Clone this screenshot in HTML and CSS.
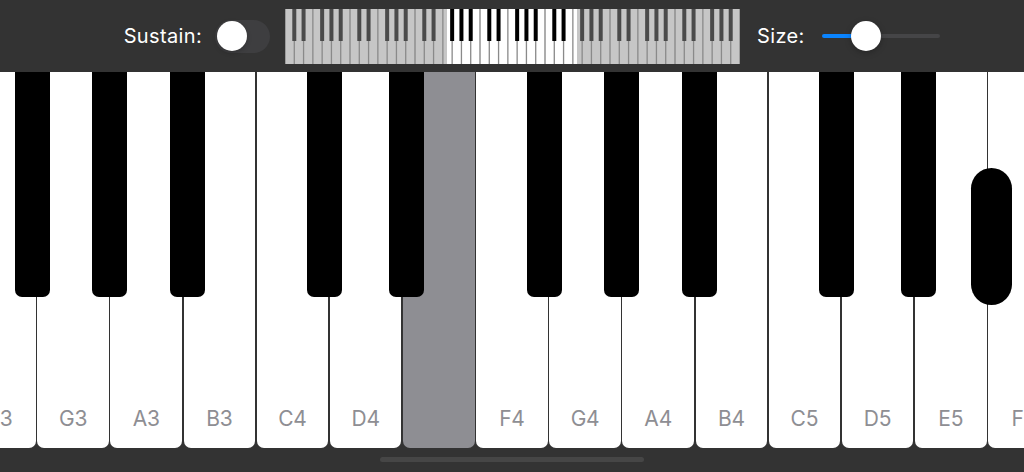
FILE: index.html
```html
<!DOCTYPE html>
<html lang="en">
<head>
<meta charset="utf-8">
<title>Piano</title>
<link rel="stylesheet" href="styles.css">
</head>
<body>
<div class="topbar">
  <div class="group group-left">
    <span class="bar-label">Sustain:</span>
    <div class="switch"><div class="switch-knob"></div></div>
  </div>
  <svg class="mini" width="455" height="55" viewBox="0 0 455 55">
    <defs>
      <pattern id="oct-gray" x="0" y="0" width="65" height="55" patternUnits="userSpaceOnUse">
        <rect width="65" height="55" fill="#c6c6c6"/>
        <rect x="0" width="0.7" height="55" fill="#8a8a8a"/>
        <rect x="64.3" width="0.7" height="55" fill="#8a8a8a"/>
        <rect x="8.64" width="1.3" height="55" fill="#8a8a8a"/>
        <rect x="17.92" width="1.3" height="55" fill="#8a8a8a"/>
        <rect x="27.21" width="1.3" height="55" fill="#8a8a8a"/>
        <rect x="36.49" width="1.3" height="55" fill="#8a8a8a"/>
        <rect x="45.78" width="1.3" height="55" fill="#8a8a8a"/>
        <rect x="55.06" width="1.3" height="55" fill="#8a8a8a"/>
        <rect x="7.29" width="4" height="32" fill="#4a4a4a"/>
        <rect x="16.57" width="4" height="32" fill="#4a4a4a"/>
        <rect x="35.14" width="4" height="32" fill="#4a4a4a"/>
        <rect x="44.43" width="4" height="32" fill="#4a4a4a"/>
        <rect x="53.71" width="4" height="32" fill="#4a4a4a"/>
      </pattern>
      <pattern id="oct-white" x="0" y="0" width="65" height="55" patternUnits="userSpaceOnUse">
        <rect width="65" height="55" fill="#ffffff"/>
        <rect x="0" width="0.7" height="55" fill="#8a8a8a"/>
        <rect x="64.3" width="0.7" height="55" fill="#8a8a8a"/>
        <rect x="8.64" width="1.3" height="55" fill="#8a8a8a"/>
        <rect x="17.92" width="1.3" height="55" fill="#8a8a8a"/>
        <rect x="27.21" width="1.3" height="55" fill="#8a8a8a"/>
        <rect x="36.49" width="1.3" height="55" fill="#8a8a8a"/>
        <rect x="45.78" width="1.3" height="55" fill="#8a8a8a"/>
        <rect x="55.06" width="1.3" height="55" fill="#8a8a8a"/>
        <rect x="7.29" width="4" height="32" fill="#000000"/>
        <rect x="16.57" width="4" height="32" fill="#000000"/>
        <rect x="35.14" width="4" height="32" fill="#000000"/>
        <rect x="44.43" width="4" height="32" fill="#000000"/>
        <rect x="53.71" width="4" height="32" fill="#000000"/>
      </pattern>
    </defs>
    <rect x="0" y="0" width="455" height="55" fill="url(#oct-gray)"/>
    <rect x="162" y="0" width="130" height="55" fill="url(#oct-white)"/>
  </svg>
  <div class="group group-right">
    <span class="bar-label size-label">Size:</span>
    <div class="slider">
      <div class="slider-fill"></div>
      <div class="slider-knob"></div>
      <div class="slider-rest"></div>
    </div>
  </div>
</div>

<div class="keys-wrap">
  <div class="keyboard">
    <div class="white"><div class="black fs"></div><span class="note">F3</span></div>
    <div class="white"><div class="black gs"></div><span class="note">G3</span></div>
    <div class="white"><div class="black as"></div><span class="note">A3</span></div>
    <div class="white"><span class="note">B3</span></div>
    <div class="white"><div class="black cs"></div><span class="note">C4</span></div>
    <div class="white"><div class="black ds"></div><span class="note">D4</span></div>
    <div class="white pressed"><span class="note">E4</span></div>
    <div class="white"><div class="black fs"></div><span class="note">F4</span></div>
    <div class="white"><div class="black gs"></div><span class="note">G4</span></div>
    <div class="white"><div class="black as"></div><span class="note">A4</span></div>
    <div class="white"><span class="note">B4</span></div>
    <div class="white"><div class="black cs"></div><span class="note">C5</span></div>
    <div class="white"><div class="black ds"></div><span class="note">D5</span></div>
    <div class="white"><div class="black floating"></div><span class="note">E5</span></div>
    <div class="white"><div class="black fs"></div><span class="note">F5</span></div>
  </div>
</div>

<div class="bottom">
  <div class="home-indicator"></div>
</div>
</body>
</html>
```

FILE: styles.css
```css
html, body {
  margin: 0;
  padding: 0;
}

body {
  width: 1024px;
  height: 472px;
  overflow: hidden;
  background: #333333;
  font-family: Inter, "Noto Sans", "Liberation Sans", sans-serif;
}

/* ---------- top bar ---------- */
.topbar {
  height: 72px;
  display: grid;
  grid-template-columns: 1fr 455px 1fr;
  align-items: center;
  background: #333333;
}

.group {
  display: flex;
  align-items: center;
}

.group-left {
  justify-self: end;
  padding-right: 14.5px;
}

.group-right {
  justify-self: start;
  padding-left: 17.5px;
}

.bar-label {
  color: #ffffff;
  font-size: 20px;
  line-height: 24px;
  margin-right: 13px;
  letter-spacing: 0.35px;
}

.size-label {
  margin-right: 17px;
}

.mini {
  display: block;
  width: 455px;
  height: 55px;
}

/* switch */
.switch {
  width: 55px;
  height: 33px;
  border-radius: 17px;
  background: #3e3e40;
  display: flex;
  align-items: center;
  padding-left: 1.5px;
  box-sizing: border-box;
}

.switch-knob {
  width: 30px;
  height: 30px;
  border-radius: 50%;
  background: #ffffff;
  box-shadow: 0 2px 5px rgba(0, 0, 0, 0.2);
}

/* slider */
.slider {
  width: 118px;
  height: 30px;
  display: flex;
  align-items: center;
}

.slider-fill {
  width: 44px;
  height: 4px;
  border-radius: 2px 0 0 2px;
  background: #0a84ff;
}

.slider-knob {
  position: relative;
  z-index: 1;
  flex: 0 0 30px;
  height: 30px;
  margin: 0 -15px;
  border-radius: 50%;
  background: #ffffff;
  box-shadow: 0 2px 6px rgba(0, 0, 0, 0.25);
}

.slider-rest {
  flex: 1;
  height: 4px;
  border-radius: 0 2px 2px 0;
  background: #454547;
}

/* ---------- keyboard ---------- */
.keys-wrap {
  height: 376px;
  overflow: hidden;
}

.keyboard {
  display: flex;
  gap: 1.5px;
  height: 376px;
  margin-left: -35.9px;
}

.white {
  position: relative;
  flex: 0 0 71.65px;
  height: 376px;
  box-sizing: border-box;
  background: #ffffff;
  border-radius: 0 0 7px 7px;
  display: flex;
  flex-direction: column;
  justify-content: flex-end;
  align-items: center;
  padding-bottom: 17px;
}

.white.pressed {
  background: #8e8e93;
}

.note {
  color: #8e8e93;
  font-size: 21px;
  line-height: 25px;
  letter-spacing: -0.2px;
}

.black {
  position: absolute;
  top: 0;
  z-index: 1;
  width: 35px;
  height: 225px;
  background: #000000;
  border-radius: 0 0 7px 7px;
}

.black.cs { left: 50.2px; }
.black.ds { left: 59.2px; }
.black.fs { left: 50.9px; }
.black.gs { left: 55px; }
.black.as { left: 59.5px; }

.black.floating {
  left: 55.9px;
  top: 95.5px;
  width: 40.7px;
  height: 137px;
  border-radius: 20.5px;
}

/* ---------- bottom strip ---------- */
.bottom {
  height: 24px;
  display: flex;
  justify-content: center;
  padding-top: 9px;
  box-sizing: border-box;
}

.home-indicator {
  width: 264px;
  height: 5px;
  border-radius: 3px;
  background: #464646;
}
```
